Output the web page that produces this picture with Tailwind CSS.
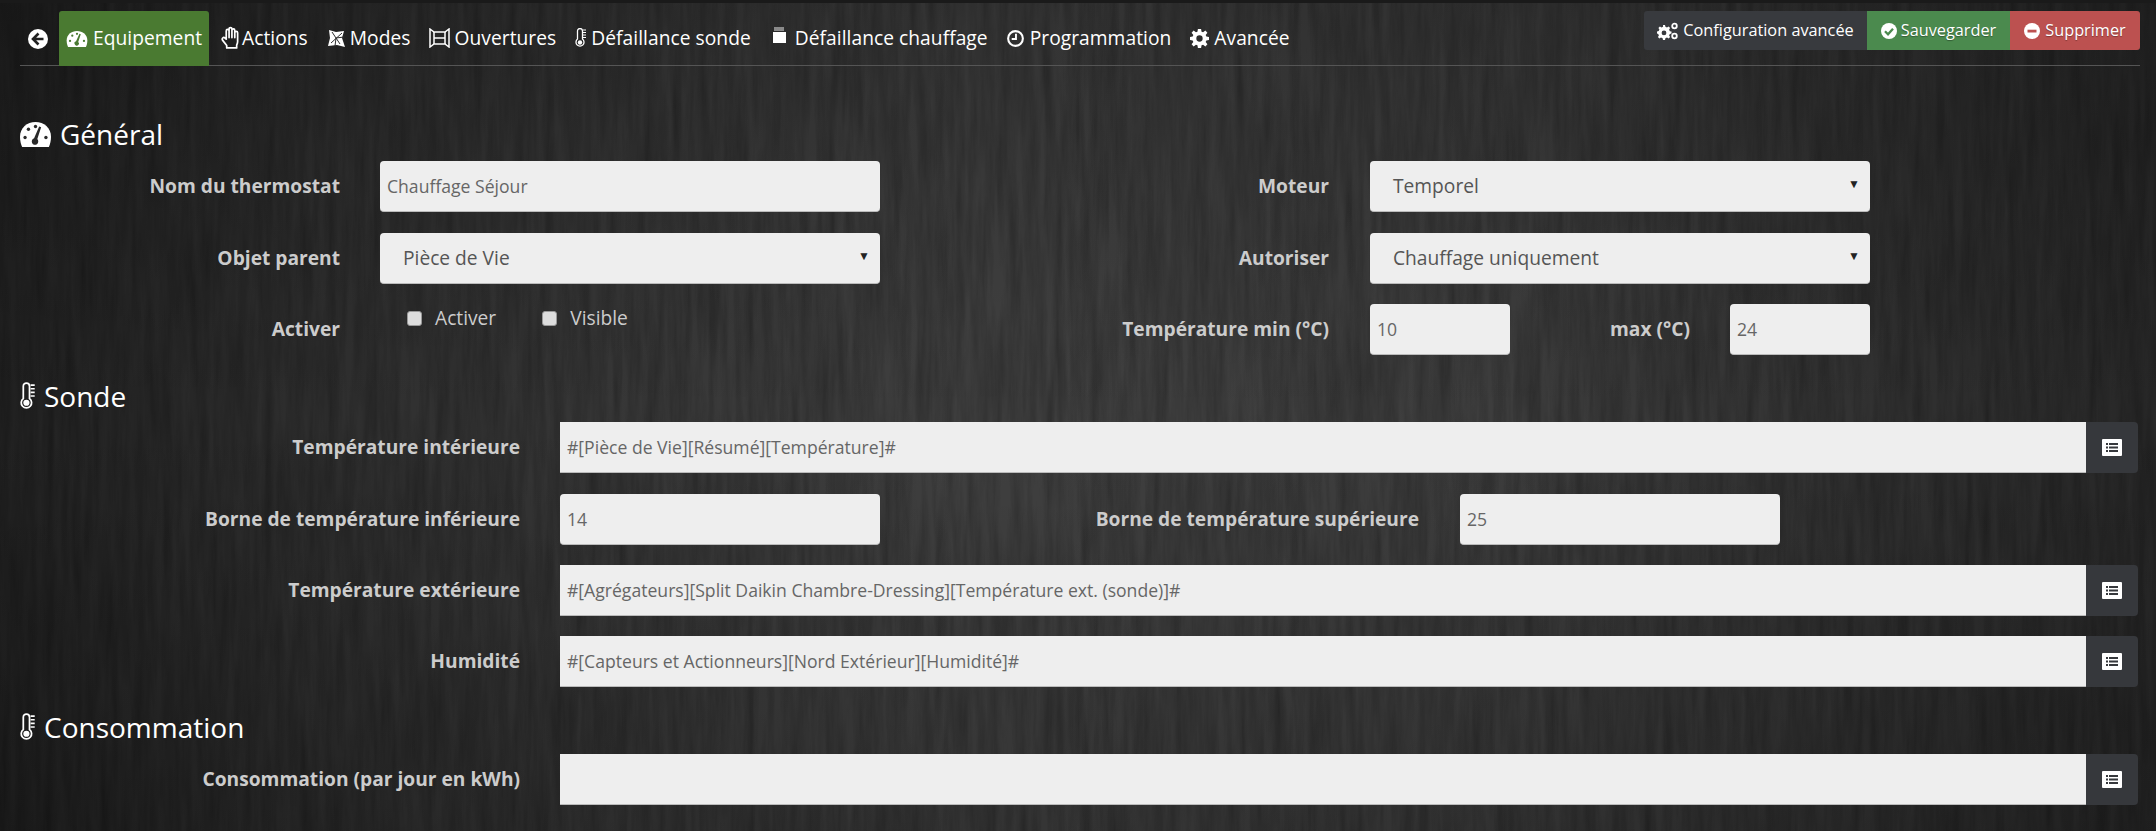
<!DOCTYPE html>
<html lang="fr">
<head>
  <meta charset="UTF-8" />
  <title>Thermostat</title>
  <script src="https://cdn.jsdelivr.net/npm/@tailwindcss/browser@4"></script>
</head>
<body class="relative h-[831px] overflow-hidden bg-[#404040] font-['Open_Sans',sans-serif] text-white">

  <!-- wood background -->
  <svg class="absolute inset-0 h-full w-full" xmlns="http://www.w3.org/2000/svg">
    <filter id="wood" x="0" y="0" width="100%" height="100%">
      <feTurbulence type="fractalNoise" baseFrequency="0.11 0.009" numOctaves="5" seed="7"/>
      <feColorMatrix type="matrix" values="0 0 0 0 0  0 0 0 0 0  0 0 0 0 0  0.28 0.28 0 0 -0.18"/>
    </filter>
    <defs>
      <linearGradient id="shade" x1="0" x2="1" y1="0" y2="0">
        <stop offset="0" stop-color="#000" stop-opacity=".48"/>
        <stop offset=".15" stop-color="#000" stop-opacity=".28"/>
        <stop offset=".45" stop-color="#000" stop-opacity="0"/>
        <stop offset=".7" stop-color="#000" stop-opacity=".05"/>
        <stop offset="1" stop-color="#000" stop-opacity=".38"/>
      </linearGradient>
      <linearGradient id="shade2" x1="0" x2="0" y1="0" y2="1">
        <stop offset="0" stop-color="#000" stop-opacity=".2"/>
        <stop offset=".5" stop-color="#000" stop-opacity="0"/>
        <stop offset="1" stop-color="#000" stop-opacity=".18"/>
      </linearGradient>
    </defs>
    <rect width="100%" height="100%" filter="url(#wood)"/>
    <rect width="100%" height="100%" fill="url(#shade)"/>
    <rect width="100%" height="100%" fill="url(#shade2)"/>
  </svg>

  <div class="relative h-[3px] bg-[#1a1a1a]"></div>

  <div class="relative pl-5 pr-4">

    <!-- top bar -->
    <div class="flex h-[63px] items-start justify-between border-b border-[#555] pt-2">
      <div class="flex h-[55px] items-center text-[19.2px] tracking-[0.0025em]">
        <a class="flex w-[39px] justify-start pl-2"><svg class="h-[20px] w-[20px]" viewBox="0 0 20 20"><circle cx="10" cy="10" r="10" fill="#fff"/><path d="M10.500 4.500 5 10l5.500 5.500M5.500 10H15.500" fill="none" stroke="#222" stroke-width="2.600"/></svg></a>
        <a class="flex h-full w-[150px] items-center gap-[5px] rounded-t-[3px] bg-[#4a7a31] pl-[7px]">
          <svg class="h-[16px] w-[22px]" viewBox="0 0 22 17"><path fill="#fff" d="M11 0C5 0 0 4 0 10c0 2.500.6 5 1.500 7h19c.9-2 1.500-4.500 1.500-7 0-6-5-10-11-10Z"/><g fill="#4a7a31"><circle cx="3.600" cy="10.500" r="1.200"/><circle cx="6" cy="5" r="1.200"/><circle cx="11" cy="3" r="1.200"/><circle cx="18.400" cy="10.500" r="1.200"/><path d="m15 3.500-2.700 8.100a2.300 2.300 0 1 1-2.300-.6L13.600 3Z"/></g></svg>
          Equipement
        </a>
        <a class="ml-[12px] flex items-center gap-[2px]"><svg class="h-[24px] w-[19px]" viewBox="0 0 20 25"><path fill="none" stroke="#fff" stroke-width="1.800" stroke-linejoin="round" stroke-linecap="round" d="M5.500 13V5a1.500 1.500 0 0 1 3 0V3a1.500 1.500 0 0 1 3 0v1.500a1.500 1.500 0 0 1 3 0V7a1.500 1.500 0 0 1 3 0v9.500c0 1.500-.5 2.500-1 3.500v3H6v-2.500L1.800 15c-1.400-1.800.7-4 2.400-2.500l1.300 1.200M8.500 5v7M11.500 4v8M14.500 5v7"/></svg>Actions</a>
        <a class="ml-[20px] flex items-center gap-[5px]"><svg class="h-[17px] w-[17px]" viewBox="0 0 17 17"><path fill="#fff" d="M1 0 8 2l8-1-2 7 3 9-8-2-9 1 2-8z"/><path fill="none" stroke="#2d2d2d" stroke-width="1" d="M4 2l8 12M14 3 3 13M8 8l8-1M8 8l-1 8"/></svg>Modes</a>
        <a class="ml-[18px] flex items-center gap-[5px]"><svg class="h-[20px] w-[21px]" viewBox="0 0 21 20"><g fill="none" stroke="#fff" stroke-width="1.500"><path d="M1 1l4 3h11l4-3v18l-4-3H5l-4 3z"/><path d="M5 4v12M16 4v12M5 10h11"/></g></svg>Ouvertures</a>
        <a class="ml-[19px] flex items-center gap-[4px]"><svg class="h-[20px] w-[12px]" viewBox="0 0 12 20"><path fill="none" stroke="#fff" stroke-width="1.300" d="M2.500 11V3a2.500 2.500 0 0 1 5 0v8a4 4 0 1 1-5 0Z"/><circle cx="5" cy="14.500" r="2.200" fill="#fff"/><path stroke="#fff" stroke-width="1.100" d="M8 2h3M8 4.500h3M8 7h3M8 9.500h3"/></svg>Défaillance sonde</a>
        <a class="ml-[22px] flex items-center gap-[9px]"><svg class="mb-[7px] h-[16px] w-[13px]" viewBox="0 0 13 16"><path fill="#fff" d="M0 5h13v11H0z"/><path stroke="#fff" stroke-width=".9" d="M2 0v4M4 0v4M6 0v4M8 0v4M10 0v4"/></svg>Défaillance chauffage</a>
        <a class="ml-[19px] flex items-center gap-[6px]"><svg class="h-[17px] w-[17px]" viewBox="0 0 18 18"><circle cx="9" cy="9" r="7.800" fill="none" stroke="#fff" stroke-width="2.200"/><path d="M9.500 4v5.500H5" fill="none" stroke="#fff" stroke-width="2"/></svg>Programmation</a>
        <a class="ml-[19px] flex items-center gap-[5px]"><svg class="h-[19px] w-[19px]" viewBox="0 0 24 24"><path fill="#fff" fill-rule="evenodd" d="M14 0l.6 3.400 1.900.8L19.400 2 22 4.600l-2.200 2.900.8 1.900L24 10v4l-3.400.6-.8 1.900 2.200 2.900-2.600 2.600-2.900-2.200-1.900.8L14 24h-4l-.6-3.400-1.900-.8L4.600 22 2 19.400l2.200-2.900-.8-1.900L0 14v-4l3.400-.6.8-1.900L2 4.600 4.600 2l2.900 2.200 1.900-.8L10 0zM12 8a4 4 0 1 0 0 8 4 4 0 0 0 0-8Z"/></svg>Avancée</a>
      </div>
      <div class="flex h-[39px] text-[16.3px]">
        <a class="flex w-[223px] items-center justify-center gap-[5px] rounded-l-[3px] bg-[#383a3e]"><svg class="h-[18px] w-[21px]" viewBox="0 0 21 18"><path fill="#fff" fill-rule="evenodd" d="M8 3l.4 1.800 1.600.7 1.600-1 1.500 1.500-1 1.600.7 1.600 1.700.3v2l-1.700.4-.7 1.600 1 1.600-1.500 1.500-1.600-1-1.600.7L8 18H6l-.4-1.700-1.600-.7-1.600 1-1.500-1.500 1-1.600-.7-1.600L0 11.500v-2l1.700-.4.7-1.600-1-1.600 1.500-1.500 1.600 1 1.600-.7L6 3zM7 8.500a2.400 2.400 0 1 0 0 4.800 2.400 2.400 0 0 0 0-4.800Z"/><circle cx="17.500" cy="4" r="2.300" fill="none" stroke="#fff" stroke-width="1.800"/><circle cx="17.500" cy="14" r="2.300" fill="none" stroke="#fff" stroke-width="1.800"/></svg>Configuration avancée</a>
        <a class="flex w-[143px] items-center justify-center gap-[4px] bg-[#4b8a4e] [text-shadow:0_1px_1px_#0005]"><svg class="h-[16px] w-[16px]" viewBox="0 0 16 16"><circle cx="8" cy="8" r="8" fill="#fff"/><path d="m4 8.300 3 3 5-5.600" fill="none" stroke="#4b8a4e" stroke-width="2.300"/></svg>Sauvegarder</a>
        <a class="flex w-[130px] items-center justify-center gap-[5px] rounded-r-[3px] bg-[#bc5150] [text-shadow:0_1px_1px_#0005]"><svg class="h-[16px] w-[16px]" viewBox="0 0 16 16"><circle cx="8" cy="8" r="8" fill="#fff"/><path d="M3.500 6.700h9v2.800h-9z" fill="#bc5150"/></svg>Supprimer</a>
      </div>
    </div>

    <!-- Général -->
    <h3 class="mt-[50px] flex h-[36px] items-center gap-[9px] text-[28px]">
      <svg class="h-[25px] w-[31px]" viewBox="0 0 22 17" preserveAspectRatio="none"><path fill="#fff" d="M11 0C5 0 0 4 0 10c0 2.500.6 5 1.500 7h19c.9-2 1.500-4.500 1.500-7 0-6-5-10-11-10Z"/><g fill="#2a2a2a"><circle cx="3.600" cy="10.500" r="1.200"/><circle cx="6" cy="5" r="1.200"/><circle cx="11" cy="3" r="1.200"/><circle cx="18.400" cy="10.500" r="1.200"/><path d="m15 3.500-2.700 8.100a2.300 2.300 0 1 1-2.300-.6L13.600 3Z"/></g></svg>
      Général
    </h3>
    <div class="mt-[9px] grid grid-cols-[860px_1fr]">
      <div>
        <div class="flex items-center">
          <label class="w-[320px] text-right text-[19.2px] font-bold text-[#ccc]">Nom du thermostat</label>
          <div class="ml-[40px] flex h-[51px] w-[500px] items-center rounded-[4px] border-b border-[#bbb] bg-[#eee] px-[7px] text-[17.6px] text-[#666]">Chauffage Séjour</div>
        </div>
        <div class="mt-[21px] flex items-center">
          <label class="w-[320px] text-right text-[19.2px] font-bold text-[#ccc]">Objet parent</label>
          <div class="relative ml-[40px] flex h-[51px] w-[500px] items-center rounded-[4px] border-b border-[#bbb] bg-[#eee] pl-[23px] text-[19.2px] text-[#555]">Pièce de Vie<span class="absolute right-[10px] top-[14px] text-[12px] text-[#222]">▼</span></div>
        </div>
        <div class="mt-[20px] flex h-[51px]">
          <label class="flex h-full w-[320px] items-center justify-end text-[19.2px] font-bold text-[#ccc]">Activer</label>
          <div class="ml-[67px] flex h-[28px] items-center text-[19.2px] text-[#ccc]">
            <span class="h-[15px] w-[15px] rounded-[3px] border border-[#999] bg-[#ddd]"></span><span class="ml-[13px]">Activer</span>
            <span class="ml-[46px] h-[15px] w-[15px] rounded-[3px] border border-[#999] bg-[#ddd]"></span><span class="ml-[13px]">Visible</span>
          </div>
        </div>
      </div>
      <div>
        <div class="flex items-center">
          <label class="w-[449px] text-right text-[19.2px] font-bold text-[#ccc]">Moteur</label>
          <div class="relative ml-[41px] flex h-[51px] w-[500px] items-center rounded-[4px] border-b border-[#bbb] bg-[#eee] pl-[23px] text-[19.2px] text-[#555]">Temporel<span class="absolute right-[10px] top-[14px] text-[12px] text-[#222]">▼</span></div>
        </div>
        <div class="mt-[21px] flex items-center">
          <label class="w-[449px] text-right text-[19.2px] font-bold text-[#ccc]">Autoriser</label>
          <div class="relative ml-[41px] flex h-[51px] w-[500px] items-center rounded-[4px] border-b border-[#bbb] bg-[#eee] pl-[23px] text-[19.2px] text-[#555]">Chauffage uniquement<span class="absolute right-[10px] top-[14px] text-[12px] text-[#222]">▼</span></div>
        </div>
        <div class="mt-[20px] flex items-center">
          <label class="w-[449px] text-right text-[19.2px] font-bold text-[#ccc]">Température min (°C)</label>
          <div class="ml-[41px] flex h-[51px] w-[140px] items-center rounded-[4px] border-b border-[#bbb] bg-[#eee] px-[7px] text-[17.6px] text-[#666]">10</div>
          <label class="w-[180px] text-right text-[19.2px] font-bold text-[#ccc]">max (°C)</label>
          <div class="ml-[40px] flex h-[51px] w-[140px] items-center rounded-[4px] border-b border-[#bbb] bg-[#eee] px-[7px] text-[17.6px] text-[#666]">24</div>
        </div>
      </div>
    </div>

    <!-- Sonde -->
    <h3 class="mt-[23px] flex h-[36px] items-center gap-[6px] text-[28px]">
      <svg class="h-[28px] w-[18px]" viewBox="0 0 17 27"><path fill="none" stroke="#fff" stroke-width="1.700" d="M3 16V4a3 3 0 0 1 6 0v12a5 5 0 1 1-6 0Z"/><circle cx="6" cy="20" r="3" fill="#fff"/><path stroke="#fff" stroke-width="1.500" d="M10 3h4M10 6.500h4M10 10h4M10 13.500h4"/></svg>
      Sonde
    </h3>
    <div class="mt-[8px] flex items-center">
      <label class="w-[500px] text-right text-[19.2px] font-bold text-[#ccc]">Température intérieure</label>
      <div class="ml-[40px] flex h-[51px] w-[1526px] items-center border-b border-[#bbb] bg-[#eee] px-[7px] text-[17.6px] text-[#666]">#[Pièce de Vie][Résumé][Température]#</div>
      <div class="flex h-[51px] w-[52px] items-center justify-center rounded-r-[4px] bg-[#36383c]"><svg class="h-[17px] w-[20px]" viewBox="0 0 20 17"><path fill="#fff" d="M1 0h18a1 1 0 0 1 1 1v15a1 1 0 0 1-1 1H1a1 1 0 0 1-1-1V1a1 1 0 0 1 1-1Z"/><path fill="#36383c" d="M4 4h2v2H4zM7 4h9v2H7zM4 7.500h2v2H4zM7 7.500h9v2H7zM4 11h2v2H4zM7 11h9v2H7z"/></svg></div>
    </div>
    <div class="mt-[21px] flex items-center">
      <label class="w-[500px] text-right text-[19.2px] font-bold text-[#ccc]">Borne de température inférieure</label>
      <div class="ml-[40px] flex h-[51px] w-[320px] items-center rounded-[4px] border-b border-[#bbb] bg-[#eee] px-[7px] text-[17.6px] text-[#666]">14</div>
      <label class="w-[539px] text-right text-[19.2px] font-bold text-[#ccc]">Borne de température supérieure</label>
      <div class="ml-[41px] flex h-[51px] w-[320px] items-center rounded-[4px] border-b border-[#bbb] bg-[#eee] px-[7px] text-[17.6px] text-[#666]">25</div>
    </div>
    <div class="mt-[20px] flex items-center">
      <label class="w-[500px] text-right text-[19.2px] font-bold text-[#ccc]">Température extérieure</label>
      <div class="ml-[40px] flex h-[51px] w-[1526px] items-center border-b border-[#bbb] bg-[#eee] px-[7px] text-[17.6px] text-[#666]">#[Agrégateurs][Split Daikin Chambre-Dressing][Température ext. (sonde)]#</div>
      <div class="flex h-[51px] w-[52px] items-center justify-center rounded-r-[4px] bg-[#36383c]"><svg class="h-[17px] w-[20px]" viewBox="0 0 20 17"><path fill="#fff" d="M1 0h18a1 1 0 0 1 1 1v15a1 1 0 0 1-1 1H1a1 1 0 0 1-1-1V1a1 1 0 0 1 1-1Z"/><path fill="#36383c" d="M4 4h2v2H4zM7 4h9v2H7zM4 7.500h2v2H4zM7 7.500h9v2H7zM4 11h2v2H4zM7 11h9v2H7z"/></svg></div>
    </div>
    <div class="mt-[20px] flex items-center">
      <label class="w-[500px] text-right text-[19.2px] font-bold text-[#ccc]">Humidité</label>
      <div class="ml-[40px] flex h-[51px] w-[1526px] items-center border-b border-[#bbb] bg-[#eee] px-[7px] text-[17.6px] text-[#666]">#[Capteurs et Actionneurs][Nord Extérieur][Humidité]#</div>
      <div class="flex h-[51px] w-[52px] items-center justify-center rounded-r-[4px] bg-[#36383c]"><svg class="h-[17px] w-[20px]" viewBox="0 0 20 17"><path fill="#fff" d="M1 0h18a1 1 0 0 1 1 1v15a1 1 0 0 1-1 1H1a1 1 0 0 1-1-1V1a1 1 0 0 1 1-1Z"/><path fill="#36383c" d="M4 4h2v2H4zM7 4h9v2H7zM4 7.500h2v2H4zM7 7.500h9v2H7zM4 11h2v2H4zM7 11h9v2H7z"/></svg></div>
    </div>

    <!-- Consommation -->
    <h3 class="mt-[22px] flex h-[36px] items-center gap-[6px] text-[28px]">
      <svg class="h-[28px] w-[18px]" viewBox="0 0 17 27"><path fill="none" stroke="#fff" stroke-width="1.700" d="M3 16V4a3 3 0 0 1 6 0v12a5 5 0 1 1-6 0Z"/><circle cx="6" cy="20" r="3" fill="#fff"/><path stroke="#fff" stroke-width="1.500" d="M10 3h4M10 6.500h4M10 10h4M10 13.500h4"/></svg>
      Consommation
    </h3>
    <div class="mt-[9px] flex items-center">
      <label class="w-[500px] text-right text-[19.2px] font-bold text-[#ccc]">Consommation (par jour en kWh)</label>
      <div class="ml-[40px] flex h-[51px] w-[1526px] items-center border-b border-[#bbb] bg-[#eee] px-[7px] text-[17.6px] text-[#666]"></div>
      <div class="flex h-[51px] w-[52px] items-center justify-center rounded-r-[4px] bg-[#36383c]"><svg class="h-[17px] w-[20px]" viewBox="0 0 20 17"><path fill="#fff" d="M1 0h18a1 1 0 0 1 1 1v15a1 1 0 0 1-1 1H1a1 1 0 0 1-1-1V1a1 1 0 0 1 1-1Z"/><path fill="#36383c" d="M4 4h2v2H4zM7 4h9v2H7zM4 7.500h2v2H4zM7 7.500h9v2H7zM4 11h2v2H4zM7 11h9v2H7z"/></svg></div>
    </div>

  </div>
</body>
</html>
